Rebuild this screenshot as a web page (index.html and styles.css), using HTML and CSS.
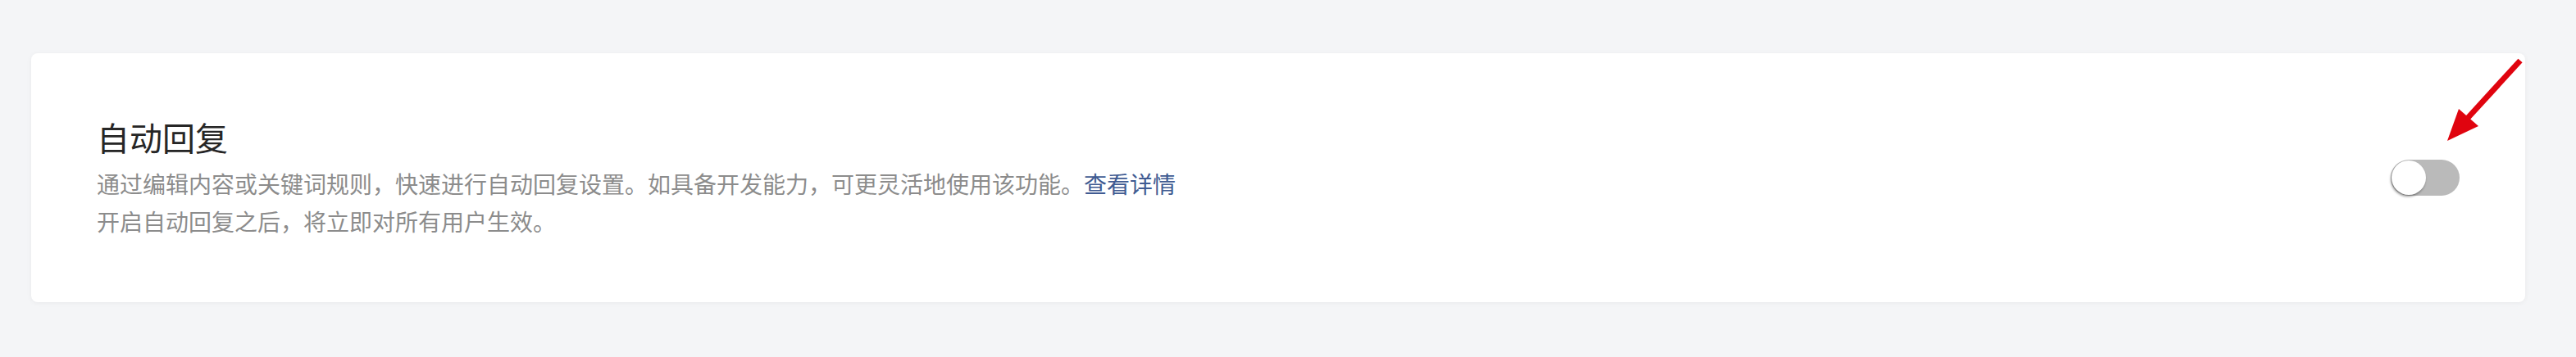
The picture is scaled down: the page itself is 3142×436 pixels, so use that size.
FILE: index.html
```html
<!DOCTYPE html>
<html lang="zh-CN">
<head>
    <meta charset="UTF-8">
    <meta name="viewport" content="width=device-width, initial-scale=1.0">
    <title>自动回复</title>
    <link rel="stylesheet" href="styles.css">
</head>
<body>
    <div class="card">
        <div class="info">
            <div class="title">自动回复</div>
            <p class="desc">通过编辑内容或关键词规则，快速进行自动回复设置。如具备开发能力，可更灵活地使用该功能。<a href="#" class="more">查看详情</a></p>
            <p class="desc">开启自动回复之后，将立即对所有用户生效。</p>
        </div>
        <div class="switch">
            <span class="knob"></span>
        </div>
        <svg class="arrow" width="100" height="105" viewBox="0 0 100 105">
            <line x1="94" y1="4" x2="30" y2="74" stroke="#e0040f" stroke-width="7"/>
            <polygon points="5,102 19,63 43,84" fill="#e0040f"/>
        </svg>
    </div>
</body>
</html>
```

FILE: styles.css
```css
body {
    background-color: #f4f5f7;
    margin: 0;
    padding: 65px 62px 67px 38px;
    font-family: "Noto Sans CJK SC", "Noto Sans", sans-serif;
}

.card {
    position: relative;
    display: flex;
    align-items: center;
    justify-content: space-between;
    height: 304px;
    box-sizing: border-box;
    padding: 0 80px;
    background-color: #fff;
    border-radius: 8px;
    box-shadow: 0 1px 6px rgba(0, 0, 0, 0.05);
}

.title {
    font-size: 40px;
    line-height: 52px;
    color: #262626;
    margin-bottom: 8px;
}

.desc {
    margin: 0;
    font-size: 28px;
    line-height: 46px;
    color: #8c8c8c;
}

.more {
    color: #405b92;
    text-decoration: none;
}

.switch {
    position: relative;
    width: 84px;
    height: 44px;
    border-radius: 22px;
    background-color: #bababa;
}

.knob {
    position: absolute;
    left: 1px;
    top: 1px;
    width: 42px;
    height: 42px;
    border-radius: 50%;
    background-color: #fff;
    box-shadow: -1px 2px 3px rgba(0, 0, 0, 0.4);
}

.arrow {
    position: absolute;
    right: 0;
    top: 5px;
}
```
